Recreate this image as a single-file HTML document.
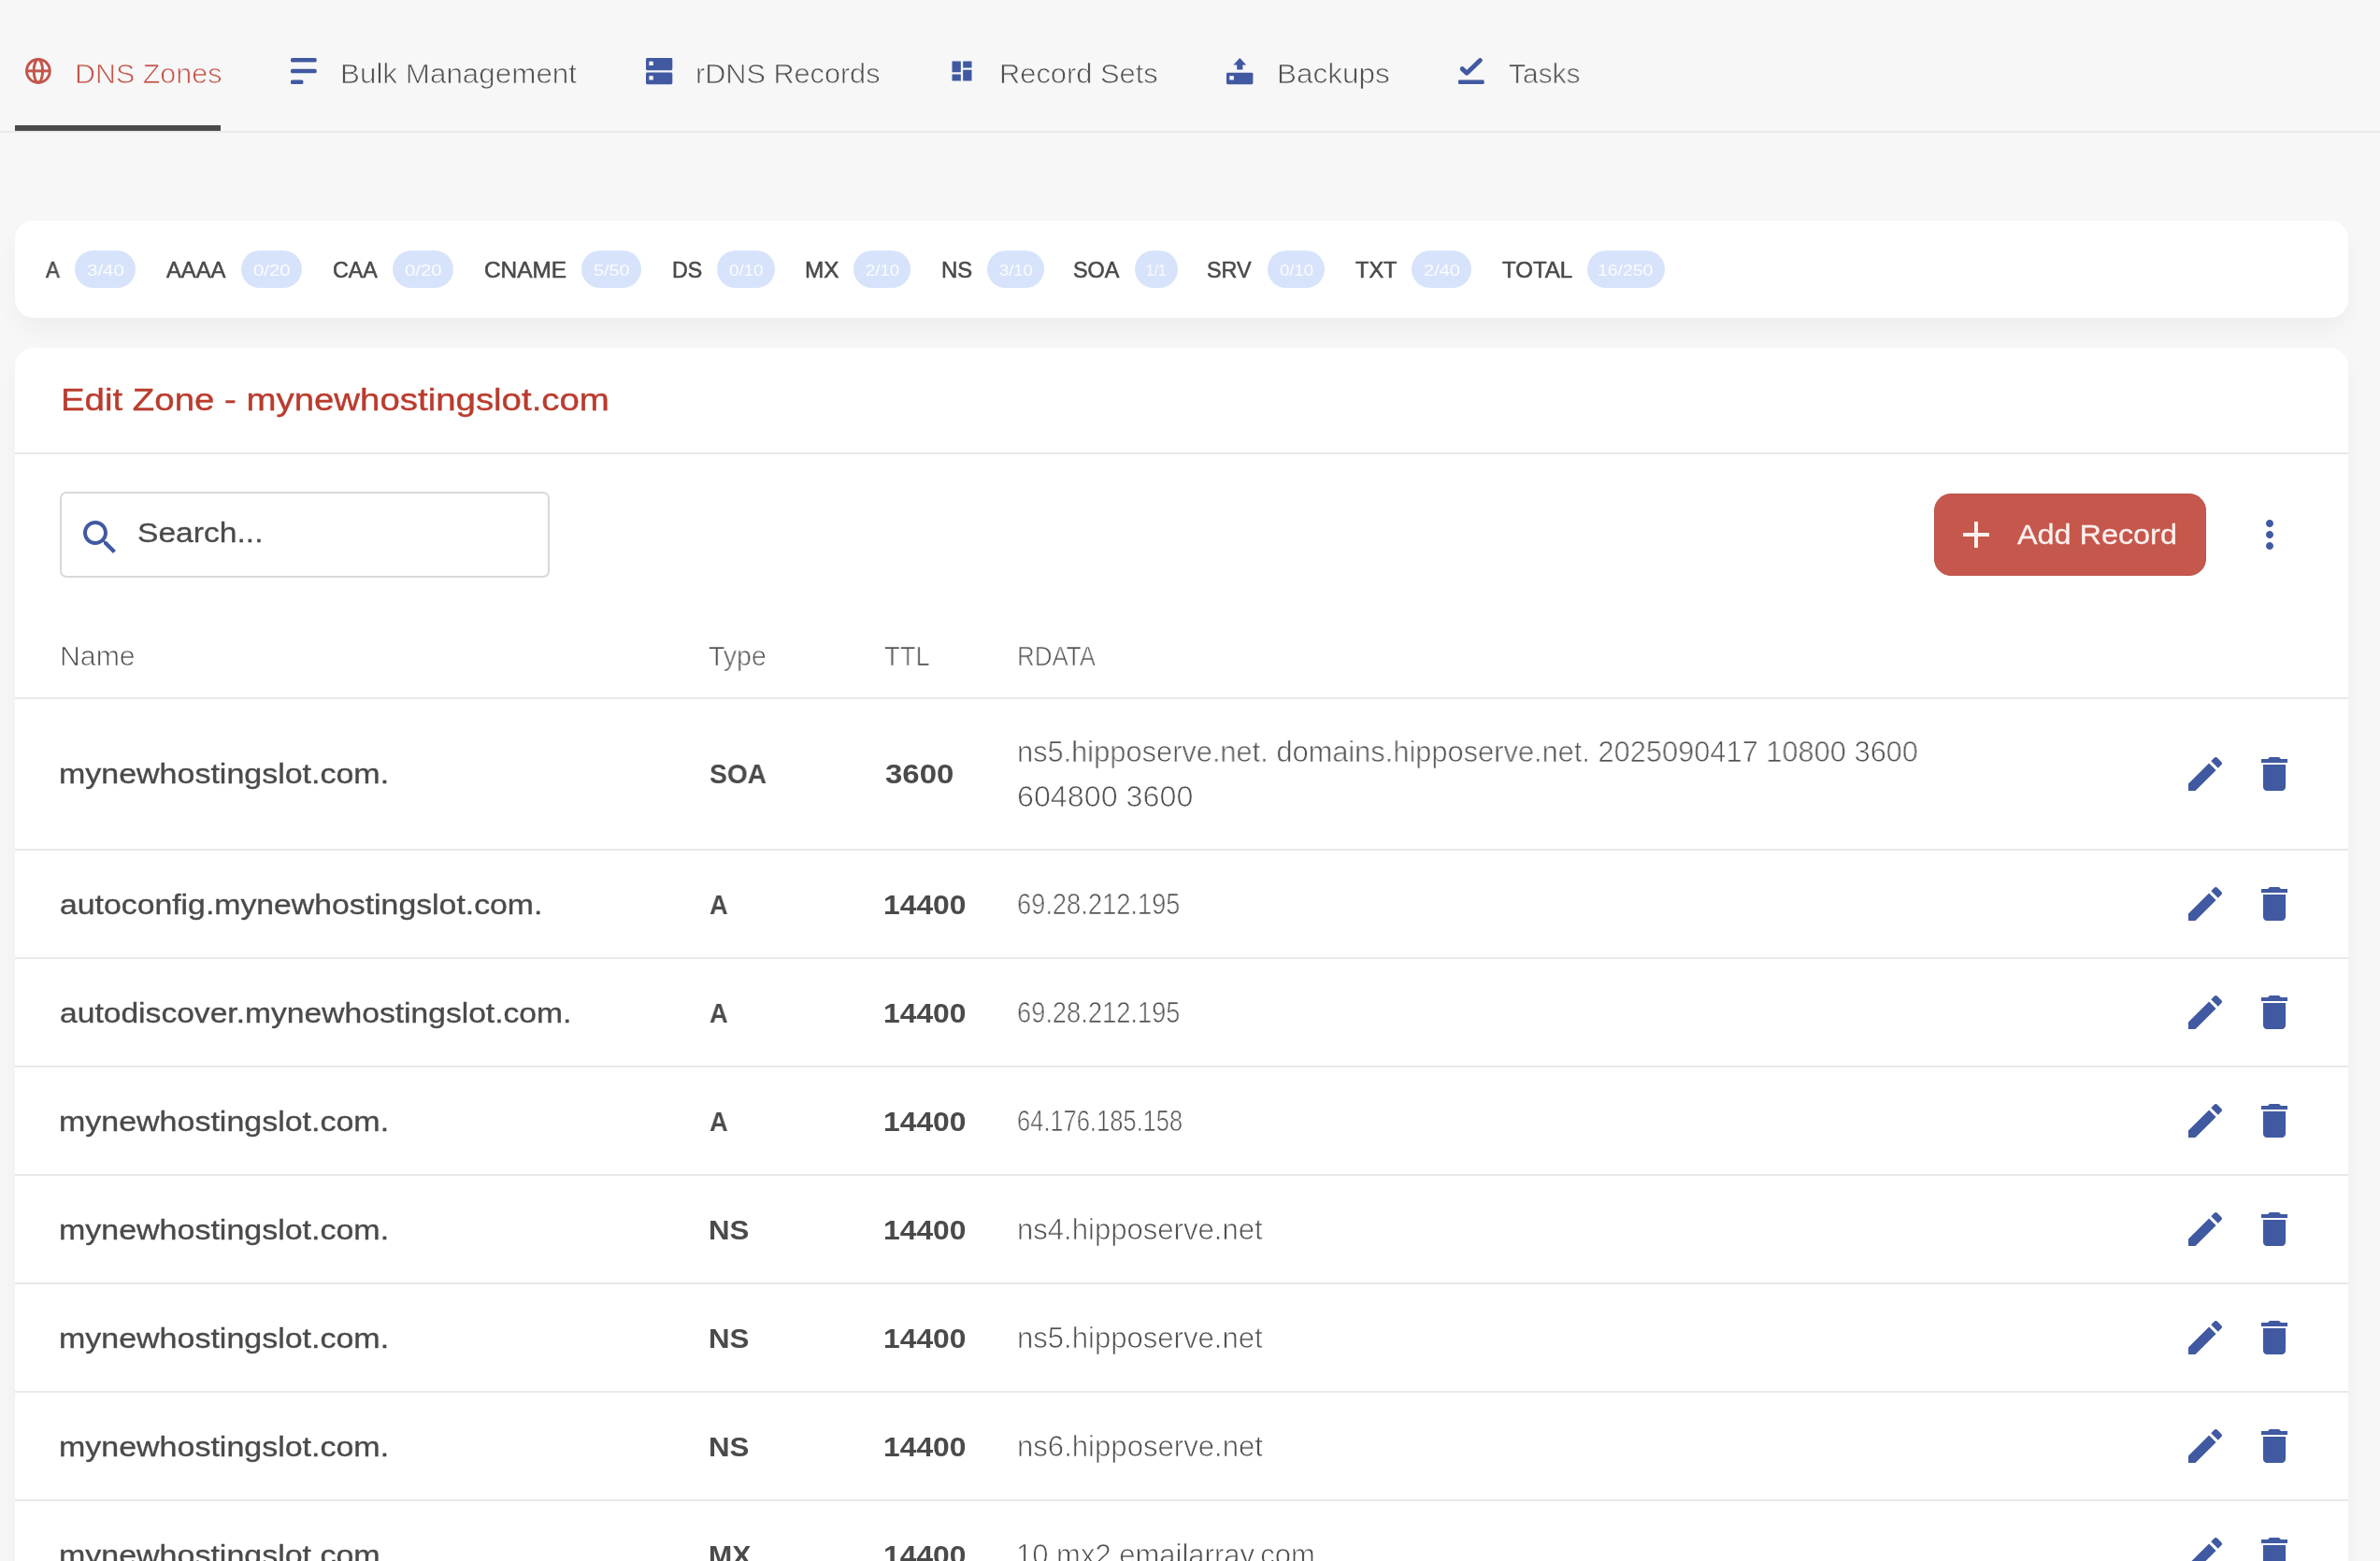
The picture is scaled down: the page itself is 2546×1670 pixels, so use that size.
<!DOCTYPE html>
<html lang="en"><head><meta charset="utf-8"><title>Edit Zone - mynewhostingslot.com</title>
<style>
html,body{margin:0;padding:0}
body{width:2546px;height:1670px;overflow:hidden;position:relative;background:#f7f7f7;font-family:"Liberation Sans",sans-serif;color:#4a4a4a}
.t{position:absolute;white-space:nowrap;transform-origin:0 0;display:block;will-change:transform}
.i{position:absolute;display:block;overflow:visible}
nav{position:absolute;left:0;top:0;width:2546px;height:142px;box-sizing:border-box;border-bottom:2px solid #e9e9ea}
nav .on{position:absolute;left:16px;top:134px;width:220px;height:6px;background:#4a4a4a}
.card{position:absolute;background:#fff;border-radius:20px;box-shadow:0 14px 28px -2px rgba(0,0,0,.044)}
.chip{position:absolute;top:32px;height:40px;border-radius:20px;background:#d7e3fb}
.hr{position:absolute;left:0;width:2496px;height:2px;background:#e9e9ea}
.search{position:absolute;left:48px;top:154px;width:524px;height:92px;box-sizing:border-box;border:2px solid #d8d9db;border-radius:7px;background:#fff}
.btn{position:absolute;left:2053px;top:156px;width:291px;height:88px;box-sizing:border-box;border-radius:18px;background:#c5574c;border:1px solid #bb554a}
.row{position:absolute;left:0;width:2496px}
</style></head><body>

<nav>
<div class="on"></div>
<svg class="i" style="left:26.7px;top:62px" width="27.8" height="27.8" viewBox="0 0 27.8 27.8" ><g fill="none" stroke="#c3554a" stroke-width="2.9"><circle cx="13.9" cy="13.9" r="12.4"/><ellipse cx="13.9" cy="13.9" rx="4.7" ry="12.4"/><path d="M1.5 13.9H26.3"/></g></svg>
<span class="t" style="left:80.02px;top:63.70px;font-size:30px;line-height:30px;transform:scaleX(1.0148);color:#c3554a;-webkit-text-stroke:0.7px #f7f7f7;">DNS Zones</span>
<svg class="i" style="left:311px;top:61.6px" width="28" height="28.5" viewBox="0 0 28 28.5" ><rect x="0" y="0" width="27.7" height="4.5" rx="1.6" fill="#4059a1"/><rect x="0" y="11.8" width="27.7" height="4.5" rx="1.6" fill="#4059a1"/><rect x="0" y="23.5" width="13.4" height="4.5" rx="1.6" fill="#4059a1"/></svg>
<span class="t" style="left:364.24px;top:63.70px;font-size:30px;line-height:30px;transform:scaleX(1.0464);color:#505050;-webkit-text-stroke:0.7px #f7f7f7;">Bulk Management</span>
<svg class="i" style="left:691.4px;top:61.6px" width="28.3" height="28.2" viewBox="0 0 28.3 28.2" ><rect x="0" y="0" width="28.3" height="13.2" rx="1.4" fill="#4059a1"/><rect x="0" y="15.6" width="28.3" height="12.6" rx="1.4" fill="#4059a1"/><rect x="3.4" y="3.7" width="4.4" height="4.3" fill="#f7f7f7"/><rect x="3.4" y="19.2" width="4.4" height="4.3" fill="#f7f7f7"/></svg>
<span class="t" style="left:744.20px;top:63.70px;font-size:30px;line-height:30px;transform:scaleX(1.0212);color:#505050;-webkit-text-stroke:0.7px #f7f7f7;">rDNS Records</span>
<svg class="i" style="left:1015.3px;top:61.5px" width="28" height="28" viewBox="0 0 24 24" ><path fill="#4059a1" d="M3 13h8V3H3v10zm0 8h8v-6H3v6zm10 0h8V11h-8v10zm0-18v6h8V3h-8z"/></svg>
<span class="t" style="left:1068.98px;top:63.70px;font-size:30px;line-height:30px;transform:scaleX(1.0281);color:#505050;-webkit-text-stroke:0.7px #f7f7f7;">Record Sets</span>
<svg class="i" style="left:1312.3px;top:61.6px" width="28.4" height="28.2" viewBox="0 0 28.4 28.2" ><rect x="0" y="15.8" width="28.4" height="12.4" rx="1.4" fill="#4059a1"/><rect x="3.3" y="19.2" width="4.6" height="4.3" fill="#f7f7f7"/><path fill="#4059a1" d="M14.3 0 L21.2 7.4 H17.4 V12.4 H11.2 V7.4 H7.4 Z"/></svg>
<span class="t" style="left:1365.53px;top:63.70px;font-size:30px;line-height:30px;transform:scaleX(1.0497);color:#505050;-webkit-text-stroke:0.7px #f7f7f7;">Backups</span>
<svg class="i" style="left:1560px;top:61.6px" width="27.7" height="28.2" viewBox="0 0 27.7 28.2" ><rect x="0" y="23.5" width="27.7" height="4.6" rx="1.4" fill="#4059a1"/><path fill="none" stroke="#4059a1" stroke-width="4.9" stroke-linecap="round" stroke-linejoin="round" d="M4.2 11.6 L9.1 16.2 L23.4 2.5"/></svg>
<span class="t" style="left:1613.95px;top:63.70px;font-size:30px;line-height:30px;transform:scaleX(0.9962);color:#505050;-webkit-text-stroke:0.7px #f7f7f7;">Tasks</span>
</nav>

<section class="card" style="left:16px;top:236px;width:2496px;height:104px">
<span class="t" style="left:32.86px;top:41.56px;font-size:23.2px;line-height:23.2px;transform:scaleX(0.9547);color:#4a4a4a;-webkit-text-stroke:0.55px #4a4a4a;">A</span>
<div class="chip" style="left:63.9px;width:64.9px"></div>
<span class="t" style="left:76.80px;top:44.67px;font-size:17.4px;line-height:17.4px;transform:scaleX(1.1786);color:#fbfcff;">3/40</span>
<span class="t" style="left:161.68px;top:41.56px;font-size:23.2px;line-height:23.2px;transform:scaleX(1.0262);color:#4a4a4a;-webkit-text-stroke:0.55px #4a4a4a;">AAAA</span>
<div class="chip" style="left:242.0px;width:64.7px"></div>
<span class="t" style="left:254.90px;top:44.67px;font-size:17.4px;line-height:17.4px;transform:scaleX(1.1726);color:#fbfcff;">0/20</span>
<span class="t" style="left:339.57px;top:41.56px;font-size:23.2px;line-height:23.2px;transform:scaleX(1.0029);color:#4a4a4a;-webkit-text-stroke:0.55px #4a4a4a;">CAA</span>
<div class="chip" style="left:404.3px;width:64.5px"></div>
<span class="t" style="left:417.20px;top:44.67px;font-size:17.4px;line-height:17.4px;transform:scaleX(1.1665);color:#fbfcff;">0/20</span>
<span class="t" style="left:501.64px;top:41.56px;font-size:23.2px;line-height:23.2px;transform:scaleX(1.0517);color:#4a4a4a;-webkit-text-stroke:0.55px #4a4a4a;">CNAME</span>
<div class="chip" style="left:606.0px;width:63.7px"></div>
<span class="t" style="left:618.90px;top:44.67px;font-size:17.4px;line-height:17.4px;transform:scaleX(1.1424);color:#fbfcff;">5/50</span>
<span class="t" style="left:703.18px;top:41.56px;font-size:23.2px;line-height:23.2px;transform:scaleX(0.9938);color:#4a4a4a;-webkit-text-stroke:0.55px #4a4a4a;">DS</span>
<div class="chip" style="left:751.2px;width:61.6px"></div>
<span class="t" style="left:764.10px;top:44.67px;font-size:17.4px;line-height:17.4px;transform:scaleX(1.0791);color:#fbfcff;">0/10</span>
<span class="t" style="left:845.04px;top:41.56px;font-size:23.2px;line-height:23.2px;transform:scaleX(1.0483);color:#4a4a4a;-webkit-text-stroke:0.55px #4a4a4a;">MX</span>
<div class="chip" style="left:896.9px;width:61.1px"></div>
<span class="t" style="left:909.80px;top:44.67px;font-size:17.4px;line-height:17.4px;transform:scaleX(1.0640);color:#fbfcff;">2/10</span>
<span class="t" style="left:990.85px;top:41.56px;font-size:23.2px;line-height:23.2px;transform:scaleX(1.0289);color:#4a4a4a;-webkit-text-stroke:0.55px #4a4a4a;">NS</span>
<div class="chip" style="left:1040.0px;width:60.7px"></div>
<span class="t" style="left:1052.90px;top:44.67px;font-size:17.4px;line-height:17.4px;transform:scaleX(1.0520);color:#fbfcff;">3/10</span>
<span class="t" style="left:1132.27px;top:41.56px;font-size:23.2px;line-height:23.2px;transform:scaleX(1.0091);color:#4a4a4a;-webkit-text-stroke:0.55px #4a4a4a;">SOA</span>
<div class="chip" style="left:1198.0px;width:45.8px"></div>
<span class="t" style="left:1210.01px;top:44.67px;font-size:17.4px;line-height:17.4px;transform:scaleX(0.8887);color:#fbfcff;">1/1</span>
<span class="t" style="left:1275.37px;top:41.56px;font-size:23.2px;line-height:23.2px;transform:scaleX(1.0054);color:#4a4a4a;-webkit-text-stroke:0.55px #4a4a4a;">SRV</span>
<div class="chip" style="left:1340.1px;width:61.0px"></div>
<span class="t" style="left:1353.00px;top:44.67px;font-size:17.4px;line-height:17.4px;transform:scaleX(1.0610);color:#fbfcff;">0/10</span>
<span class="t" style="left:1433.68px;top:41.56px;font-size:23.2px;line-height:23.2px;transform:scaleX(1.0163);color:#4a4a4a;-webkit-text-stroke:0.55px #4a4a4a;">TXT</span>
<div class="chip" style="left:1493.9px;width:64.0px"></div>
<span class="t" style="left:1506.80px;top:44.67px;font-size:17.4px;line-height:17.4px;transform:scaleX(1.1515);color:#fbfcff;">2/40</span>
<span class="t" style="left:1590.98px;top:41.56px;font-size:23.2px;line-height:23.2px;transform:scaleX(1.0350);color:#4a4a4a;-webkit-text-stroke:0.55px #4a4a4a;">TOTAL</span>
<div class="chip" style="left:1681.6px;width:83.3px"></div>
<span class="t" style="left:1693.38px;top:44.67px;font-size:17.4px;line-height:17.4px;transform:scaleX(1.1161);color:#fbfcff;">16/250</span>
</section>

<section class="card" style="left:16px;top:372px;width:2496px;height:1400px;border-bottom-left-radius:0;border-bottom-right-radius:0">
<span class="t" style="left:48.77px;top:40.39px;font-size:32.5px;line-height:32.5px;transform:scaleX(1.1814);color:#b93c2e;-webkit-text-stroke:0.4px #b93c2e;">Edit Zone - mynewhostingslot.com</span>
<div class="hr" style="top:112px"></div>
<div class="search"></div>
<svg class="i" style="left:66.7px;top:179.10000000000002px" width="48" height="48" viewBox="0 0 24 24" ><path fill="#4059a1" d="M15.5 14h-.79l-.28-.27C15.41 12.59 16 11.110 16 9.500 16 5.910 13.090 3 9.500 3S3 5.910 3 9.500 5.910 16 9.500 16c1.610 0 3.090-.59 4.230-1.570l.27.28v.79l5 4.990L20.490 19l-4.990-5zm-6 0C7.010 14 5 11.990 5 9.500S7.010 5 9.500 5 14 7.010 14 9.500 11.990 14 9.500 14z"/></svg>
<span class="t" style="left:130.65px;top:183.31px;font-size:30px;line-height:30px;transform:scaleX(1.1203);color:#4a4a4a;-webkit-text-stroke:0.3px #4a4a4a;">Search...</span>
<div class="btn"></div>
<svg class="i" style="left:2073.5px;top:176.29999999999995px" width="48" height="48" viewBox="0 0 24 24" ><path fill="#fdf0ee" d="M19 13h-6v6h-2v-6H5v-2h6V5h2v6h6v2z"/></svg>
<span class="t" style="left:2142.16px;top:185.40px;font-size:30px;line-height:30px;transform:scaleX(1.0787);color:#fdf0ee;-webkit-text-stroke:0.3px #fdf0ee;">Add Record</span>
<svg class="i" style="left:2387.6px;top:176px" width="48" height="48" viewBox="0 0 24 24" ><path fill="#4059a1" d="M12 8c1.1 0 2-.9 2-2s-.9-2-2-2-2 .9-2 2 .9 2 2 2zm0 2c-1.100 0-2 .9-2 2s.9 2 2 2 2-.9 2-2-.9-2-2-2zm0 6c-1.100 0-2 .9-2 2s.9 2 2 2 2-.9 2-2-.9-2-2-2z"/></svg>
<span class="t" style="left:47.75px;top:315.65px;font-size:29px;line-height:29px;transform:scaleX(1.0431);color:#505050;-webkit-text-stroke:0.7px #ffffff;">Name</span>
<span class="t" style="left:742.16px;top:315.65px;font-size:29px;line-height:29px;transform:scaleX(0.9829);color:#505050;-webkit-text-stroke:0.7px #ffffff;">Type</span>
<span class="t" style="left:930.17px;top:315.65px;font-size:29px;line-height:29px;transform:scaleX(0.9442);color:#505050;-webkit-text-stroke:0.7px #ffffff;">TTL</span>
<span class="t" style="left:1071.90px;top:315.65px;font-size:29px;line-height:29px;transform:scaleX(0.8930);color:#505050;-webkit-text-stroke:0.7px #ffffff;">RDATA</span>
<div class="hr" style="top:374px"></div>
<div class="row" style="top:376px;height:162px">
<span class="t" style="left:47.13px;top:65.11px;font-size:30px;line-height:30px;transform:scaleX(1.1325);color:#4a4a4a;-webkit-text-stroke:0.35px #4a4a4a;">mynewhostingslot.com.</span>
<span class="t" style="left:743.20px;top:65.11px;font-size:30px;line-height:30px;transform:scaleX(0.9402);color:#4a4a4a;font-weight:700;">SOA</span>
<span class="t" style="left:931.00px;top:65.11px;font-size:30px;line-height:30px;transform:scaleX(1.0991);color:#4a4a4a;font-weight:700;">3600</span>
<span class="t" style="left:1071.67px;top:41.06px;font-size:31px;line-height:31px;transform:scaleX(0.9934);color:#505050;-webkit-text-stroke:0.7px #ffffff;">ns5.hipposerve.net. domains.hipposerve.net. 2025090417 10800 3600</span>
<span class="t" style="left:1072.30px;top:88.86px;font-size:31px;line-height:31px;transform:scaleX(1.0403);color:#505050;-webkit-text-stroke:0.7px #ffffff;">604800 3600</span>
<svg class="i" style="left:2319px;top:56.0px" width="48" height="48" viewBox="0 0 24 24" ><path fill="#4059a1" d="M3 17.25V21h3.75L17.81 9.94l-3.75-3.75L3 17.25zM20.71 7.04c.39-.39.39-1.02 0-1.41l-2.34-2.34c-.39-.39-1.02-.39-1.41 0l-1.83 1.83 3.75 3.750 1.83-1.830z"/></svg>
<svg class="i" style="left:2392.5px;top:56.0px" width="48" height="48" viewBox="0 0 24 24" ><path fill="#4059a1" d="M6 19c0 1.1.9 2 2 2h8c1.100 0 2-.9 2-2V7H6v12zM19 4h-3.500l-1-1h-5l-1 1H5v2h14V4z"/></svg>
<div class="hr" style="top:160px"></div>
</div>
<div class="row" style="top:538px;height:116px">
<span class="t" style="left:48.27px;top:42.81px;font-size:30px;line-height:30px;transform:scaleX(1.1260);color:#4a4a4a;-webkit-text-stroke:0.35px #4a4a4a;">autoconfig.mynewhostingslot.com.</span>
<span class="t" style="left:743.10px;top:42.81px;font-size:30px;line-height:30px;transform:scaleX(0.9095);color:#4a4a4a;font-weight:700;">A</span>
<span class="t" style="left:928.84px;top:42.81px;font-size:30px;line-height:30px;transform:scaleX(1.0607);color:#4a4a4a;font-weight:700;">14400</span>
<span class="t" style="left:1072.21px;top:42.26px;font-size:31px;line-height:31px;transform:scaleX(0.8797);color:#505050;-webkit-text-stroke:0.7px #ffffff;">69.28.212.195</span>
<svg class="i" style="left:2319px;top:33.0px" width="48" height="48" viewBox="0 0 24 24" ><path fill="#4059a1" d="M3 17.25V21h3.75L17.81 9.94l-3.75-3.75L3 17.25zM20.71 7.04c.39-.39.39-1.02 0-1.41l-2.34-2.34c-.39-.39-1.02-.39-1.41 0l-1.83 1.83 3.75 3.750 1.83-1.830z"/></svg>
<svg class="i" style="left:2392.5px;top:33.0px" width="48" height="48" viewBox="0 0 24 24" ><path fill="#4059a1" d="M6 19c0 1.1.9 2 2 2h8c1.100 0 2-.9 2-2V7H6v12zM19 4h-3.500l-1-1h-5l-1 1H5v2h14V4z"/></svg>
<div class="hr" style="top:114px"></div>
</div>
<div class="row" style="top:654px;height:116px">
<span class="t" style="left:48.28px;top:42.81px;font-size:30px;line-height:30px;transform:scaleX(1.1203);color:#4a4a4a;-webkit-text-stroke:0.35px #4a4a4a;">autodiscover.mynewhostingslot.com.</span>
<span class="t" style="left:743.10px;top:42.81px;font-size:30px;line-height:30px;transform:scaleX(0.9095);color:#4a4a4a;font-weight:700;">A</span>
<span class="t" style="left:928.84px;top:42.81px;font-size:30px;line-height:30px;transform:scaleX(1.0607);color:#4a4a4a;font-weight:700;">14400</span>
<span class="t" style="left:1072.21px;top:42.26px;font-size:31px;line-height:31px;transform:scaleX(0.8797);color:#505050;-webkit-text-stroke:0.7px #ffffff;">69.28.212.195</span>
<svg class="i" style="left:2319px;top:33.0px" width="48" height="48" viewBox="0 0 24 24" ><path fill="#4059a1" d="M3 17.25V21h3.75L17.81 9.94l-3.75-3.75L3 17.25zM20.71 7.04c.39-.39.39-1.02 0-1.41l-2.34-2.34c-.39-.39-1.02-.39-1.41 0l-1.83 1.83 3.75 3.750 1.83-1.830z"/></svg>
<svg class="i" style="left:2392.5px;top:33.0px" width="48" height="48" viewBox="0 0 24 24" ><path fill="#4059a1" d="M6 19c0 1.1.9 2 2 2h8c1.100 0 2-.9 2-2V7H6v12zM19 4h-3.500l-1-1h-5l-1 1H5v2h14V4z"/></svg>
<div class="hr" style="top:114px"></div>
</div>
<div class="row" style="top:770px;height:116px">
<span class="t" style="left:47.13px;top:42.81px;font-size:30px;line-height:30px;transform:scaleX(1.1325);color:#4a4a4a;-webkit-text-stroke:0.35px #4a4a4a;">mynewhostingslot.com.</span>
<span class="t" style="left:743.10px;top:42.81px;font-size:30px;line-height:30px;transform:scaleX(0.9095);color:#4a4a4a;font-weight:700;">A</span>
<span class="t" style="left:928.84px;top:42.81px;font-size:30px;line-height:30px;transform:scaleX(1.0607);color:#4a4a4a;font-weight:700;">14400</span>
<span class="t" style="left:1072.29px;top:42.26px;font-size:31px;line-height:31px;transform:scaleX(0.8219);color:#505050;-webkit-text-stroke:0.7px #ffffff;">64.176.185.158</span>
<svg class="i" style="left:2319px;top:33.0px" width="48" height="48" viewBox="0 0 24 24" ><path fill="#4059a1" d="M3 17.25V21h3.75L17.81 9.94l-3.75-3.75L3 17.25zM20.71 7.04c.39-.39.39-1.02 0-1.41l-2.34-2.34c-.39-.39-1.02-.39-1.41 0l-1.83 1.83 3.75 3.750 1.83-1.830z"/></svg>
<svg class="i" style="left:2392.5px;top:33.0px" width="48" height="48" viewBox="0 0 24 24" ><path fill="#4059a1" d="M6 19c0 1.1.9 2 2 2h8c1.100 0 2-.9 2-2V7H6v12zM19 4h-3.500l-1-1h-5l-1 1H5v2h14V4z"/></svg>
<div class="hr" style="top:114px"></div>
</div>
<div class="row" style="top:886px;height:116px">
<span class="t" style="left:47.13px;top:42.81px;font-size:30px;line-height:30px;transform:scaleX(1.1325);color:#4a4a4a;-webkit-text-stroke:0.35px #4a4a4a;">mynewhostingslot.com.</span>
<span class="t" style="left:741.92px;top:42.81px;font-size:30px;line-height:30px;transform:scaleX(1.0423);color:#4a4a4a;font-weight:700;">NS</span>
<span class="t" style="left:928.84px;top:42.81px;font-size:30px;line-height:30px;transform:scaleX(1.0607);color:#4a4a4a;font-weight:700;">14400</span>
<span class="t" style="left:1071.64px;top:42.26px;font-size:31px;line-height:31px;transform:scaleX(1.0025);color:#505050;-webkit-text-stroke:0.7px #ffffff;">ns4.hipposerve.net</span>
<svg class="i" style="left:2319px;top:33.0px" width="48" height="48" viewBox="0 0 24 24" ><path fill="#4059a1" d="M3 17.25V21h3.75L17.81 9.94l-3.75-3.75L3 17.25zM20.71 7.04c.39-.39.39-1.02 0-1.41l-2.34-2.34c-.39-.39-1.02-.39-1.41 0l-1.83 1.83 3.75 3.750 1.83-1.830z"/></svg>
<svg class="i" style="left:2392.5px;top:33.0px" width="48" height="48" viewBox="0 0 24 24" ><path fill="#4059a1" d="M6 19c0 1.1.9 2 2 2h8c1.100 0 2-.9 2-2V7H6v12zM19 4h-3.500l-1-1h-5l-1 1H5v2h14V4z"/></svg>
<div class="hr" style="top:114px"></div>
</div>
<div class="row" style="top:1002px;height:116px">
<span class="t" style="left:47.13px;top:42.81px;font-size:30px;line-height:30px;transform:scaleX(1.1325);color:#4a4a4a;-webkit-text-stroke:0.35px #4a4a4a;">mynewhostingslot.com.</span>
<span class="t" style="left:741.92px;top:42.81px;font-size:30px;line-height:30px;transform:scaleX(1.0423);color:#4a4a4a;font-weight:700;">NS</span>
<span class="t" style="left:928.84px;top:42.81px;font-size:30px;line-height:30px;transform:scaleX(1.0607);color:#4a4a4a;font-weight:700;">14400</span>
<span class="t" style="left:1071.64px;top:42.26px;font-size:31px;line-height:31px;transform:scaleX(1.0025);color:#505050;-webkit-text-stroke:0.7px #ffffff;">ns5.hipposerve.net</span>
<svg class="i" style="left:2319px;top:33.0px" width="48" height="48" viewBox="0 0 24 24" ><path fill="#4059a1" d="M3 17.25V21h3.75L17.81 9.94l-3.75-3.75L3 17.25zM20.71 7.04c.39-.39.39-1.02 0-1.41l-2.34-2.34c-.39-.39-1.02-.39-1.41 0l-1.83 1.83 3.75 3.750 1.83-1.830z"/></svg>
<svg class="i" style="left:2392.5px;top:33.0px" width="48" height="48" viewBox="0 0 24 24" ><path fill="#4059a1" d="M6 19c0 1.1.9 2 2 2h8c1.100 0 2-.9 2-2V7H6v12zM19 4h-3.500l-1-1h-5l-1 1H5v2h14V4z"/></svg>
<div class="hr" style="top:114px"></div>
</div>
<div class="row" style="top:1118px;height:116px">
<span class="t" style="left:47.13px;top:42.81px;font-size:30px;line-height:30px;transform:scaleX(1.1325);color:#4a4a4a;-webkit-text-stroke:0.35px #4a4a4a;">mynewhostingslot.com.</span>
<span class="t" style="left:741.92px;top:42.81px;font-size:30px;line-height:30px;transform:scaleX(1.0423);color:#4a4a4a;font-weight:700;">NS</span>
<span class="t" style="left:928.84px;top:42.81px;font-size:30px;line-height:30px;transform:scaleX(1.0607);color:#4a4a4a;font-weight:700;">14400</span>
<span class="t" style="left:1071.64px;top:42.26px;font-size:31px;line-height:31px;transform:scaleX(1.0037);color:#505050;-webkit-text-stroke:0.7px #ffffff;">ns6.hipposerve.net</span>
<svg class="i" style="left:2319px;top:33.0px" width="48" height="48" viewBox="0 0 24 24" ><path fill="#4059a1" d="M3 17.25V21h3.75L17.81 9.94l-3.75-3.75L3 17.25zM20.71 7.04c.39-.39.39-1.02 0-1.41l-2.34-2.34c-.39-.39-1.02-.39-1.41 0l-1.83 1.83 3.75 3.750 1.83-1.830z"/></svg>
<svg class="i" style="left:2392.5px;top:33.0px" width="48" height="48" viewBox="0 0 24 24" ><path fill="#4059a1" d="M6 19c0 1.1.9 2 2 2h8c1.100 0 2-.9 2-2V7H6v12zM19 4h-3.500l-1-1h-5l-1 1H5v2h14V4z"/></svg>
<div class="hr" style="top:114px"></div>
</div>
<div class="row" style="top:1234px;height:116px">
<span class="t" style="left:47.13px;top:42.81px;font-size:30px;line-height:30px;transform:scaleX(1.1325);color:#4a4a4a;-webkit-text-stroke:0.35px #4a4a4a;">mynewhostingslot.com.</span>
<span class="t" style="left:741.98px;top:42.81px;font-size:30px;line-height:30px;transform:scaleX(1.0095);color:#4a4a4a;font-weight:700;">MX</span>
<span class="t" style="left:928.84px;top:42.81px;font-size:30px;line-height:30px;transform:scaleX(1.0607);color:#4a4a4a;font-weight:700;">14400</span>
<span class="t" style="left:1071.05px;top:42.26px;font-size:31px;line-height:31px;transform:scaleX(0.9996);color:#505050;-webkit-text-stroke:0.7px #ffffff;">10 mx2.emailarray.com</span>
<svg class="i" style="left:2319px;top:33.0px" width="48" height="48" viewBox="0 0 24 24" ><path fill="#4059a1" d="M3 17.25V21h3.75L17.81 9.94l-3.75-3.75L3 17.25zM20.71 7.04c.39-.39.39-1.02 0-1.41l-2.34-2.34c-.39-.39-1.02-.39-1.41 0l-1.83 1.83 3.75 3.750 1.83-1.830z"/></svg>
<svg class="i" style="left:2392.5px;top:33.0px" width="48" height="48" viewBox="0 0 24 24" ><path fill="#4059a1" d="M6 19c0 1.1.9 2 2 2h8c1.100 0 2-.9 2-2V7H6v12zM19 4h-3.500l-1-1h-5l-1 1H5v2h14V4z"/></svg>
<div class="hr" style="top:114px"></div>
</div>
</section>

</body></html>
